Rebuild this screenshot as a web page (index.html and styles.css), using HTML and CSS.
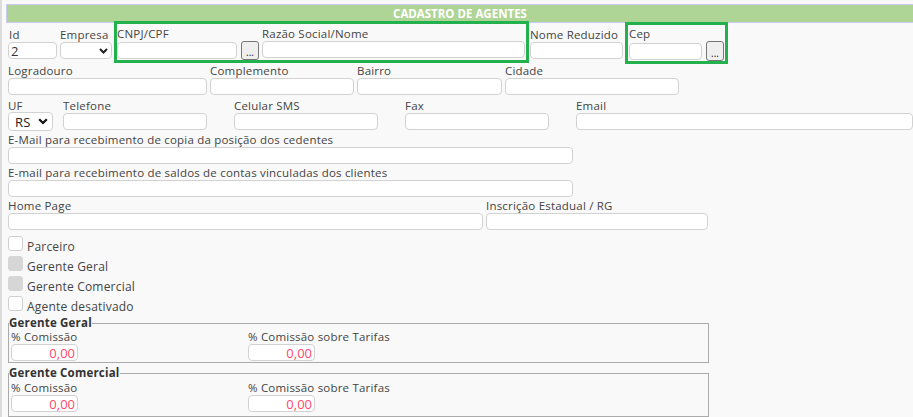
FILE: index.html
```html
<!DOCTYPE html>
<html lang="pt-BR">
<head>
  <meta charset="UTF-8">
  <title>Cadastro de Agentes</title>
  <link rel="stylesheet" href="styles.css">
</head>
<body>
  <div class="page">
    <div class="title-bar">CADASTRO DE AGENTES</div>

    <form class="form">
      <!-- Identificação -->
      <div class="row row-top">
        <div class="field f-id">
          <label>Id</label>
          <input type="text" value="2">
        </div>
        <div class="field f-empresa">
          <label>Empresa</label>
          <div class="select">
            <span></span>
            <svg width="9" height="6" viewBox="0 0 9 6"><polyline points="1,1 4.5,4.5 8,1" fill="none" stroke="#222" stroke-width="2"/></svg>
          </div>
        </div>
        <div class="highlight hl-cnpj">
          <div class="field f-cnpj">
            <label>CNPJ/CPF</label>
            <div class="input-btn">
              <input type="text">
              <button type="button" class="btn-lookup">...</button>
            </div>
          </div>
          <div class="field f-razao">
            <label>Razão Social/Nome</label>
            <input type="text">
          </div>
        </div>
        <div class="field f-nome">
          <label>Nome Reduzido</label>
          <input type="text">
        </div>
        <div class="highlight hl-cep">
          <div class="field f-cep">
            <label>Cep</label>
            <div class="input-btn">
              <input type="text">
              <button type="button" class="btn-lookup">...</button>
            </div>
          </div>
        </div>
      </div>

      <!-- Endereço -->
      <div class="row row-addr">
        <div class="field f-logradouro"><label>Logradouro</label><input type="text"></div>
        <div class="field f-complemento"><label>Complemento</label><input type="text"></div>
        <div class="field f-bairro"><label>Bairro</label><input type="text"></div>
        <div class="field f-cidade"><label>Cidade</label><input type="text"></div>
      </div>

      <!-- Contato -->
      <div class="row row-contact">
        <div class="field f-uf">
          <label>UF</label>
          <div class="select select-uf">
            <span>RS</span>
            <svg width="10" height="7" viewBox="0 0 10 7"><polyline points="1.2,1.2 5,5 8.8,1.2" fill="none" stroke="#111" stroke-width="2.2"/></svg>
          </div>
        </div>
        <div class="field f-telefone"><label>Telefone</label><input type="text"></div>
        <div class="field f-celular"><label>Celular SMS</label><input type="text"></div>
        <div class="field f-fax"><label>Fax</label><input type="text"></div>
        <div class="field f-email"><label>Email</label><input type="text"></div>
      </div>

      <div class="row row-plain">
        <div class="field f-long"><label>E-Mail para recebimento de copia da posição dos cedentes</label><input type="text"></div>
      </div>
      <div class="row row-plain">
        <div class="field f-long"><label>E-mail para recebimento de saldos de contas vinculadas dos clientes</label><input type="text"></div>
      </div>
      <div class="row row-plain">
        <div class="field f-homepage"><label>Home Page</label><input type="text"></div>
        <div class="field f-inscricao"><label>Inscrição Estadual / RG</label><input type="text"></div>
      </div>

      <!-- Opções -->
      <div class="checks">
        <div class="check"><span class="box"></span><span class="check-label">Parceiro</span></div>
        <div class="check"><span class="box disabled"></span><span class="check-label">Gerente Geral</span></div>
        <div class="check"><span class="box disabled"></span><span class="check-label">Gerente Comercial</span></div>
        <div class="check"><span class="box"></span><span class="check-label">Agente desativado</span></div>
      </div>

      <!-- Comissões -->
      <fieldset class="group">
        <legend>Gerente Geral</legend>
        <div class="row">
          <div class="field f-comissao"><label>% Comissão</label><input type="text" class="money" value="0,00"></div>
          <div class="field f-comissao"><label>% Comissão sobre Tarifas</label><input type="text" class="money" value="0,00"></div>
        </div>
      </fieldset>

      <fieldset class="group group-last">
        <legend>Gerente Comercial</legend>
        <div class="row">
          <div class="field f-comissao"><label>% Comissão</label><input type="text" class="money" value="0,00"></div>
          <div class="field f-comissao"><label>% Comissão sobre Tarifas</label><input type="text" class="money" value="0,00"></div>
        </div>
      </fieldset>
    </form>
  </div>
</body>
</html>
```

FILE: styles.css
```css
/* Cadastro de agentes */
body {
  margin: 0;
  background-color: #f9f9f9;
  font-family: "Open Sans", Arial, sans-serif;
  font-size: 11.5px;
  letter-spacing: 0.2px;
  color: #444;
}

.page {
  border-left: 2px solid #dcdcdc;
  padding: 4px 0 0 4px;
  min-height: 420px;
}

.title-bar {
  height: 17px;
  line-height: 17px;
  border: 1px solid #c9c9f2;
  border-right: none;
  background-color: #afd596;
  color: #fff;
  font-weight: bold;
  font-size: 11.5px;
  letter-spacing: 0;
  text-align: center;
}

.form {
  padding-left: 2px;
}

.row {
  display: flex;
  align-items: flex-start;
}

.field label {
  display: block;
  height: 14px;
  line-height: 14px;
  white-space: nowrap;
}

.field input {
  display: block;
  box-sizing: border-box;
  height: 17px;
  margin: 0;
  padding: 0 2px;
  border: 1px solid #d2d2d2;
  border-radius: 4px;
  background-color: #fff;
  font-family: inherit;
  font-size: 13px;
  color: #333;
  outline: none;
}

.select {
  box-sizing: border-box;
  height: 17px;
  display: flex;
  align-items: center;
  justify-content: space-between;
  padding: 0 3px 0 6px;
  border: 1px solid #d2d2d2;
  border-radius: 4px;
  background-color: #fff;
  font-size: 13px;
  color: #222;
}

/* linha 1 */
.row-top {
  margin-top: -2px;
  height: 43px;
}

.f-id, .f-empresa, .f-nome {
  padding-top: 7px;
}

.f-id label { padding-left: 1px; }
.f-id input { width: 49px; }
.f-empresa { margin-left: 3px; }
.f-empresa .select { width: 52px; }

.highlight {
  display: flex;
  align-items: flex-start;
  border: 3px solid #22b14c;
  padding: 3px 1px 0 0;
}

.hl-cnpj { margin-left: 2px; }
.hl-cep { margin-left: 2px; margin-top: 1px; padding-top: 2px; }

.input-btn {
  display: flex;
  align-items: center;
}

.f-cnpj input { width: 120px; }
.f-razao { margin-left: 3px; }
.f-razao input { width: 263px; }
.f-nome { margin-left: 1px; }
.f-nome input { width: 93px; }
.f-cep { margin-left: 1px; }
.f-cep input { width: 73px; }

.btn-lookup {
  box-sizing: border-box;
  width: 18px;
  height: 20px;
  margin-left: 4px;
  padding: 0 0 2px;
  display: flex;
  align-items: flex-end;
  justify-content: center;
  border: 1px solid #777;
  border-radius: 3px;
  background-color: #efefef;
  font-family: inherit;
  font-size: 10px;
  line-height: 10px;
  letter-spacing: 0;
  color: #222;
}

.hl-cnpj .btn-lookup { height: 19px; }

/* endereço */
.row-addr { margin-bottom: 4px; }
.f-logradouro input { width: 199px; }
.f-complemento { margin-left: 3px; }
.f-complemento input { width: 144px; }
.f-bairro { margin-left: 3px; }
.f-bairro input { width: 145px; }
.f-cidade { margin-left: 3px; }
.f-cidade input { width: 174px; }

/* contato */
.row-contact { margin-bottom: 3px; }
.select-uf {
  width: 45px;
  height: 19px;
  margin: -1px 0;
  padding-right: 4px;
}
.f-telefone { margin-left: 10px; }
.f-celular, .f-fax, .f-email { margin-left: 27px; }
.f-telefone input, .f-celular input, .f-fax input { width: 144px; }
.f-email input { width: 337px; }

.row-plain { margin-bottom: 2px; }
.f-long input { width: 565px; }
.f-homepage input { width: 475px; }
.f-inscricao { margin-left: 3px; }
.f-inscricao input { width: 222px; }

/* opções */
.checks {
  margin-top: 6px;
}

.check {
  display: flex;
  align-items: flex-start;
  height: 20px;
}

.box {
  box-sizing: border-box;
  width: 15px;
  height: 15px;
  border: 1px solid #d0d0d0;
  border-radius: 3px;
  background-color: #fff;
}

.box.disabled {
  border-color: #d6d6d6;
  background-color: #d6d6d6;
}

.check-label {
  margin: 4px 0 0 4px;
  line-height: 14px;
  font-size: 12px;
}

/* comissões */
.group {
  width: 701px;
  box-sizing: border-box;
  margin: 0;
  padding: 0 2px 1px;
  border: 1px solid #ababab;
}

.group-last {
  margin-top: 3px;
  padding-top: 1px;
  padding-bottom: 4px;
}

.group legend {
  margin-left: -2px;
  padding: 0;
  line-height: 14px;
  font-weight: bold;
  color: #333;
}

.f-comissao {
  width: 237px;
}

.f-comissao input.money {
  width: 67px;
  text-align: right;
  color: #ff4768;
}
```
